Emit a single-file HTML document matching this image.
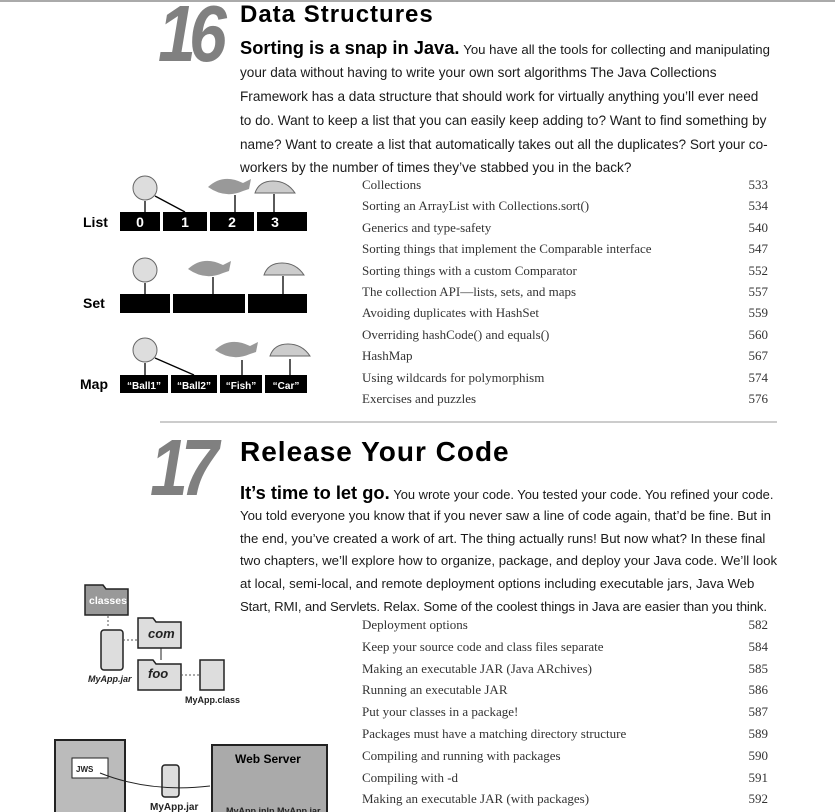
<!DOCTYPE html>
<html><head><meta charset="utf-8"><style>
*{margin:0;padding:0;box-sizing:border-box}
body{width:835px;height:812px;background:#fff;position:relative;overflow:hidden;font-family:"Liberation Sans",sans-serif;color:#222}
.a{position:absolute;white-space:nowrap}
.num{font-family:"Liberation Sans",sans-serif;font-style:italic;font-weight:bold;color:#808080;font-size:80px;letter-spacing:-8px;transform:scaleX(.85);transform-origin:left top}
.t{font-weight:bold;color:#000;font-size:24px;letter-spacing:1px}
.b{font-size:13.6px;color:#1a1a1a}
.b2{font-size:13.2px;color:#1a1a1a}
.b strong,.b2 strong{font-size:18.3px;color:#000}
.toc{font-family:"Liberation Serif",serif;font-size:13px;color:#333}
.pg{font-family:"Liberation Serif",serif;font-size:13px;color:#333;right:67px;position:absolute}
</style></head><body>
<div class="a" style="left:0;top:0;width:835px;height:2px;background:#aaa"></div>

<div class="a num" style="left:158px;top:-12px">16</div>
<div class="a t" style="left:240px;top:1px">Data Structures</div>
<div class="a b" style="left:240px;top:37px"><strong>Sorting is a snap in Java.</strong> <span style="font-size:13.2px">You have all the tools for collecting and manipulating</span></div>
<div class="a b" style="left:240px;top:65px">your data without having to write your own sort algorithms  The Java Collections</div>
<div class="a b" style="left:240px;top:89px">Framework has a data structure that should work for virtually anything you’ll ever need</div>
<div class="a b" style="left:240px;top:113px">to do. Want to keep a list that you can easily keep adding to? Want to find something by</div>
<div class="a b" style="left:240px;top:137px">name? Want to create a list that automatically takes out all the duplicates? Sort your co-</div>
<div class="a b" style="left:240px;top:160px">workers by the number of times they’ve stabbed you in the back?</div>

<svg class="a" style="left:0;top:170px" width="330" height="240">
<g fill="#000">
<rect x="120" y="42" width="40" height="19"/><rect x="163" y="42" width="44" height="19"/><rect x="210" y="42" width="44" height="19"/><rect x="257" y="42" width="50" height="19"/>
<rect x="120" y="124" width="50" height="19"/><rect x="173" y="124" width="72" height="19"/><rect x="248" y="124" width="59" height="19"/>
<rect x="120" y="205" width="48" height="18"/><rect x="171" y="205" width="46" height="18"/><rect x="220" y="205" width="42" height="18"/><rect x="265" y="205" width="42" height="18"/>
</g>
<g fill="#fff" font-weight="bold" font-family="Liberation Sans" text-anchor="middle">
<text x="140" y="57" font-size="14">0</text><text x="185" y="57" font-size="14">1</text><text x="232" y="57" font-size="14">2</text><text x="275" y="57" font-size="14">3</text>
<text x="144" y="219" font-size="10">“Ball1”</text><text x="194" y="219" font-size="10">“Ball2”</text><text x="241" y="219" font-size="10">“Fish”</text><text x="286" y="219" font-size="10">“Car”</text>
</g>
<g font-weight="bold" font-family="Liberation Sans" font-size="14" fill="#000">
<text x="83" y="57">List</text><text x="83" y="138">Set</text><text x="80" y="219">Map</text>
</g>
<g fill="#ddd" stroke="#666">
<circle cx="145" cy="18" r="12"/><circle cx="145" cy="100" r="12"/><circle cx="145" cy="180" r="12"/>
</g>
<g fill="#999"><path d="M208 17 q15-14 35-4 l8-4 -2 10 -6 2 q-18 8-35-4z"/><path d="M188 99 q15-14 35-4 l8-4 -2 10 -6 2 q-18 8-35-4z"/><path d="M215 180 q15-14 35-4 l8-4 -2 10 -6 2 q-18 8-35-4z"/>
<path d="M255 23 q4-12 18-12 q14 0 22 12z" fill="#ccc" stroke="#666"/><path d="M264 105 q4-12 18-12 q14 0 22 12z" fill="#ccc" stroke="#666"/><path d="M270 186 q4-12 18-12 q14 0 22 12z" fill="#ccc" stroke="#666"/></g>
<g stroke="#000" stroke-width="1.3">
<line x1="145" y1="42" x2="145" y2="31"/><line x1="185" y1="42" x2="155" y2="26"/><line x1="235" y1="42" x2="235" y2="25"/><line x1="274" y1="42" x2="274" y2="24"/>
<line x1="145" y1="124" x2="145" y2="113"/><line x1="213" y1="124" x2="213" y2="107"/><line x1="283" y1="124" x2="283" y2="106"/>
<line x1="145" y1="205" x2="145" y2="193"/><line x1="194" y1="205" x2="155" y2="188"/><line x1="242" y1="205" x2="242" y2="190"/><line x1="290" y1="205" x2="290" y2="189"/>
</g>
</svg>

<div class="a toc" style="left:362px;top:174px;line-height:21.4px">Collections<br>Sorting an ArrayList with Collections.sort()<br>Generics and type-safety<br>Sorting things that implement the Comparable interface<br>Sorting things with a custom Comparator<br>The collection API—lists, sets, and maps<br>Avoiding duplicates with HashSet<br>Overriding hashCode() and equals()<br>HashMap<br>Using wildcards for polymorphism<br>Exercises and puzzles</div>
<div class="pg" style="top:174px;line-height:21.4px;text-align:right">533<br>534<br>540<br>547<br>552<br>557<br>559<br>560<br>567<br>574<br>576</div>

<div class="a" style="left:160px;top:421px;width:617px;height:2px;background:#ccc"></div>

<div class="a num" style="left:150px;top:422px">17</div>
<div class="a t" style="left:240px;top:436px;font-size:28px;letter-spacing:1px">Release Your Code</div>
<div class="a b2" style="left:240px;top:482px"><strong>It’s time to let go.</strong> <span style="font-size:12.9px">You wrote your code. You tested your code. You refined your code.</span></div>
<div class="a b2" style="left:240px;top:508px">You told everyone you know that if you never saw a line of code again, that’d be fine. But in</div>
<div class="a b2" style="left:240px;top:531px">the end, you’ve created a work of art.  The thing actually runs! But now what? In these final</div>
<div class="a b2" style="left:240px;top:553px">two chapters, we’ll explore how to organize, package, and deploy your Java code. We’ll look</div>
<div class="a b2" style="left:240px;top:576px">at local, semi-local, and remote deployment options including executable jars, Java Web</div>
<div class="a b2" style="left:240px;top:599px;letter-spacing:-.15px">Start, RMI, and Servlets. Relax. Some of the coolest things in Java are easier than you think.</div>

<svg class="a" style="left:0;top:560px" width="330" height="252">
<g stroke="#222" stroke-width="1.5" fill="#999"><path d="M85 25 h18 l3 4 h22 v26 h-43z"/></g>
<g stroke="#222" stroke-width="1.5" fill="#ddd"><path d="M138 58 h15 l3 4 h25 v26 h-43z"/><path d="M138 100 h15 l3 4 h25 v26 h-43z"/>
<rect x="101" y="70" width="22" height="40" rx="3"/><rect x="200" y="100" width="24" height="30"/><rect x="232" y="212" width="24" height="36"/><rect x="290" y="212" width="18" height="34" rx="3"/><rect x="162" y="205" width="17" height="32" rx="3"/></g>
<rect x="55" y="180" width="70" height="80" fill="#bbb" stroke="#222" stroke-width="2"/>
<rect x="72" y="198" width="36" height="20" fill="#fff" stroke="#222"/>
<rect x="212" y="185" width="115" height="70" fill="#aaa" stroke="#222" stroke-width="2"/>
<path d="M100 213 q50 20 110 13" stroke="#222" fill="none"/>
<g stroke="#555" stroke-dasharray="2 2"><line x1="108" y1="56" x2="108" y2="68"/><line x1="123" y1="80" x2="137" y2="80"/><line x1="181" y1="115" x2="200" y2="115"/></g>
<line x1="161" y1="88" x2="161" y2="100" stroke="#222"/>
<g font-family="Liberation Sans" font-weight="bold" fill="#222">
<text x="89" y="44" font-size="10.5" fill="#fff" stroke="none">classes</text>
<text x="148" y="78" font-size="13" font-style="italic">com</text><text x="148" y="118" font-size="13" font-style="italic">foo</text>
<text x="88" y="122" font-size="9" font-style="italic">MyApp.jar</text><text x="185" y="143" font-size="9">MyApp.class</text>
<text x="76" y="212" font-size="8">JWS</text><text x="235" y="203" font-size="12" fill="#000">Web Server</text>
<text x="150" y="250" font-size="10">MyApp.jar</text><text x="226" y="254" font-size="9">MyApp.jnlp  MyApp.jar</text>
</g>
</svg>

<div class="a toc" style="left:362px;top:614px;line-height:21.8px">Deployment options<br>Keep your source code and class files separate<br>Making an executable JAR (Java ARchives)<br>Running an executable JAR<br>Put your classes in a package!<br>Packages must have a matching directory structure<br>Compiling and running with packages<br>Compiling with -d<br>Making an executable JAR (with packages)</div>
<div class="pg" style="top:614px;line-height:21.8px;text-align:right">582<br>584<br>585<br>586<br>587<br>589<br>590<br>591<br>592</div>
</body></html>
